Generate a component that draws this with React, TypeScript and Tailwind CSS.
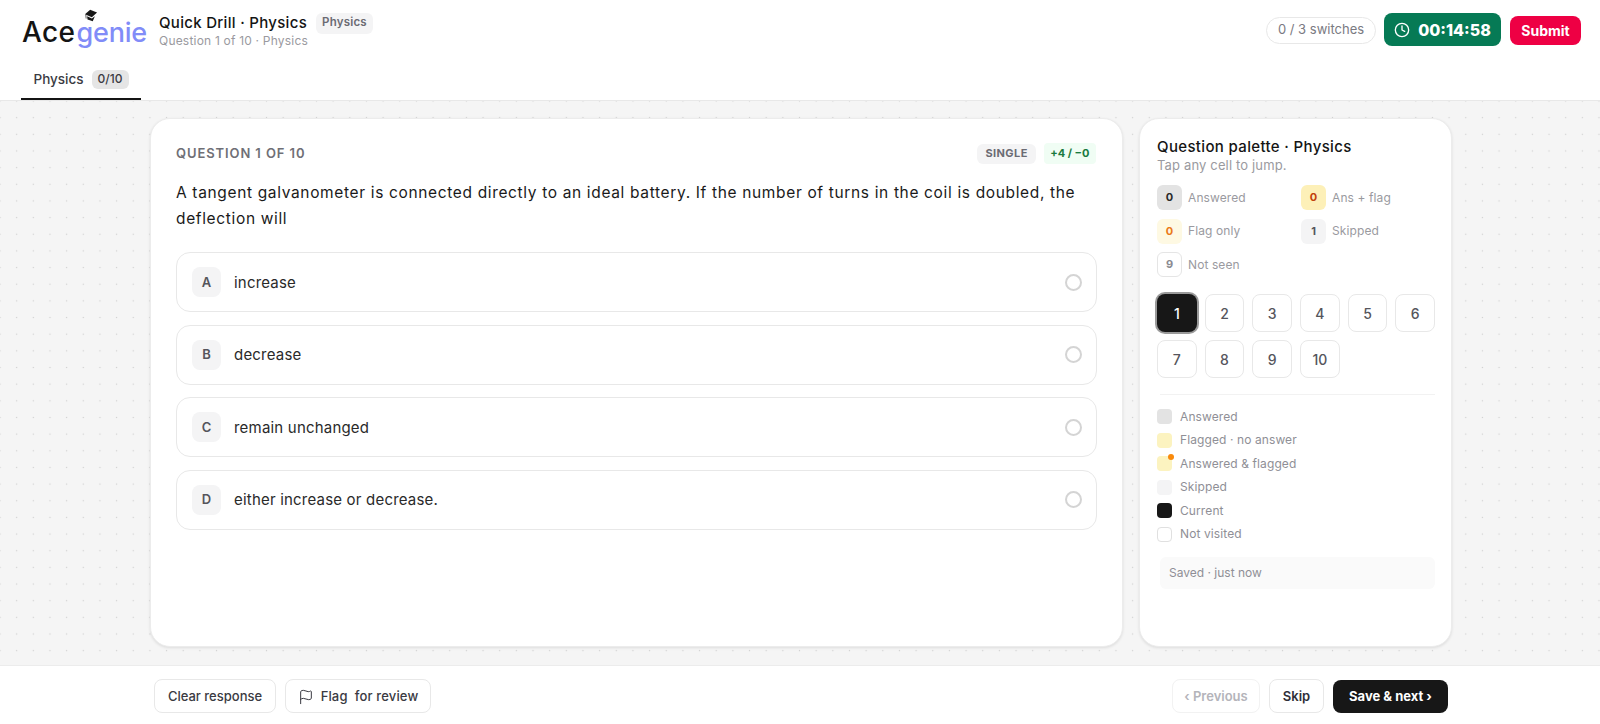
import { Clock, Flag } from 'lucide-react';

const OPTIONS = [
  { key: 'A', text: 'increase' },
  { key: 'B', text: 'decrease' },
  { key: 'C', text: 'remain unchanged' },
  { key: 'D', text: 'either increase or decrease.' },
];

const STATS = [
  { value: '0', label: 'Answered', chip: 'bg-[#e3e3e3] text-[#2a2a2a]' },
  { value: '0', label: 'Ans + flag', chip: 'bg-[#fdf0b8] text-[#c2410c]' },
  { value: '0', label: 'Flag only', chip: 'bg-[#fef9e3] text-[#ea7a1a]' },
  { value: '1', label: 'Skipped', chip: 'bg-[#f4f4f5] text-[#55555c]' },
  { value: '9', label: 'Not seen', chip: 'bg-white border border-[#e5e5e5] text-[#8a8a90]' },
];

const LEGEND = [
  { label: 'Answered', swatch: 'bg-[#e3e3e3]' },
  { label: 'Flagged · no answer', swatch: 'bg-[#fcf3c0]' },
  { label: 'Answered & flagged', swatch: 'bg-[#fcf3c0]', dot: true },
  { label: 'Skipped', swatch: 'bg-[#f4f4f5]' },
  { label: 'Current', swatch: 'bg-[#171717]' },
  { label: 'Not visited', swatch: 'bg-white border border-[#e0e0e0]' },
];

const Logo = () => (
  <div className="relative flex items-baseline w-[125px] ml-[22px] pt-[3px] leading-none [font-family:Inter,sans-serif]">
    <span className="text-[#141414] font-medium text-[28px] tracking-[0.4px]">Ace</span>
    <span className="ml-[1px] text-[#818cf8] font-medium text-[27px] tracking-[-0.2px]">genie</span>
    <svg viewBox="0 0 16 15" className="absolute left-[62px] -top-[6px] w-[14px] h-[13px]">
      <path d="M1 6 L7 1 L15 4 L9 9.5 Z" fill="#171717" />
      <path d="M3.5 8.5 L4 12 L10 14 L12.5 8.5 L9 11 Z" fill="#171717" />
      <path d="M2 6.5 L2.4 11" stroke="#171717" strokeWidth="0.8" fill="none" />
    </svg>
  </div>
);

export default function App() {
  return (
    <div className="h-screen flex flex-col bg-white overflow-hidden [font-family:Inter,sans-serif]">
      {/* Header */}
      <header className="h-[101px] shrink-0 bg-white border-b border-[#e8e8e8] flex flex-col">
        <div className="flex items-center h-[60px] pr-[19px]">
          <Logo />
          <div className="ml-[12px]">
            <div className="flex items-center gap-[9px]">
              <span className="text-[15px] font-medium text-[#141414] tracking-[0.3px]">Quick Drill · Physics</span>
              <span className="h-[21px] flex items-center px-[6px] rounded-md bg-[#f4f4f5] text-[11.5px] font-semibold text-[#6b6b73] tracking-[0.2px]">Physics</span>
            </div>
            <div className="text-[12px] leading-[14px] text-[#9a9aa0] tracking-[0.2px]">Question 1 of 10 · Physics</div>
          </div>
          <div className="ml-auto flex items-center">
            <span className="h-[27px] w-[110px] flex items-center justify-center rounded-full border border-[#e8e8e8] text-[13px] text-[#7a7a82]">0 / 3 switches</span>
            <span className="ml-[8px] mb-[1px] h-[33px] w-[117px] flex items-center justify-center gap-[8px] rounded-lg bg-[#067a55] text-white text-[16px] font-extrabold">
              <Clock className="w-[16px] h-[16px]" strokeWidth={2} />
              00:14:58
            </span>
            <button className="ml-[9px] h-[29px] w-[71px] rounded-lg bg-[#ee0044] text-white text-[14px] font-bold">Submit</button>
          </div>
        </div>
        <div className="flex flex-1 pl-[21px]">
          <div className="w-[120px] h-[40px] flex items-center justify-center gap-[8px] border-b-2 border-[#141414]">
            <span className="text-[13.5px] font-medium text-[#3a3a42]">Physics</span>
            <span className="h-[19px] flex items-center px-[6px] rounded-md bg-[#e5e5e5] text-[12px] font-medium text-[#3a3a42]">0/10</span>
          </div>
        </div>
      </header>

      {/* Main */}
      <main className="flex-1 min-h-0 flex gap-[16px] pl-[150px] pr-[148px] pt-[17px] pb-[18px] bg-[#f5f5f5] bg-[radial-gradient(#cfcfcf_0.8px,transparent_1px)] bg-[size:16.67px_16.67px] bg-[position:-8.33px_-8.33px]">
        <section className="flex-1 bg-white rounded-[20px] border border-[#ececec] shadow-[0_1px_3px_rgba(0,0,0,0.1)] px-[25px] pt-[24px]">
          <div className="flex items-center justify-between h-[21px]">
            <span className="text-[13px] font-semibold text-[#6f6f76] tracking-[0.9px]">QUESTION 1 OF 10</span>
            <div className="flex items-center gap-[8px] mr-[1px]">
              <span className="h-[20px] flex items-center px-[8px] rounded-md bg-[#f4f4f5] text-[11px] font-bold text-[#6b6b73] tracking-[0.4px]">SINGLE</span>
              <span className="h-[21px] flex items-center px-[6.5px] rounded-[4px] bg-[#f0fdf4] text-[11px] font-bold text-[#1a7a3e]">+4 / −0</span>
            </div>
          </div>
          <p className="mt-[16px] text-[15.5px] leading-[26px] text-[#1a1a1a] tracking-[0.65px]">
            A tangent galvanometer is connected directly to an ideal battery. If the number of turns in the coil is doubled, the deflection will
          </p>
          <div className="mt-[20px] flex flex-col gap-[12.5px]">
            {OPTIONS.map((o) => (
              <div key={o.key} className="h-[60px] flex items-center pl-[15px] pr-[14px] rounded-[14px] border border-[#e8e8e8] bg-white">
                <span className="w-[29px] h-[30px] pt-[1px] flex items-center justify-center rounded-lg bg-[#f4f4f5] text-[13px] font-semibold text-[#55555c]">{o.key}</span>
                <span className="ml-[13px] pt-[2px] text-[15px] text-[#2a2a2a] tracking-[0.2px]">{o.text}</span>
                <span className="ml-auto w-[17px] h-[17px] rounded-full border-2 border-[#d4d4d4]" />
              </div>
            ))}
          </div>
        </section>

        <aside className="w-[313px] shrink-0 bg-white rounded-[20px] border border-[#ececec] shadow-[0_1px_3px_rgba(0,0,0,0.1)] pl-[17px] pr-[16px] pt-[18px]">
          <h2 className="text-[15px] leading-[20px] font-medium text-[#141414] tracking-[0.35px]">Question palette · Physics</h2>
          <p className="text-[13px] leading-[16px] text-[#9a9aa0] tracking-[0.15px]">Tap any cell to jump.</p>
          <div className="mt-[12px] grid grid-cols-2 gap-x-[10px] gap-y-[8.5px]">
            {STATS.map((s) => (
              <div key={s.label} className="flex items-center gap-[6px]">
                <span className={`w-[25px] h-[25px] flex items-center justify-center rounded-md text-[11px] font-bold ${s.chip}`}>{s.value}</span>
                <span className="text-[12px] text-[#9a9aa0] tracking-[0.1px]">{s.label}</span>
              </div>
            ))}
          </div>
          <div className="mt-[17px] grid grid-cols-6 gap-[8px]">
            {Array.from({ length: 10 }, (_, i) => i + 1).map((n) => (
              <button
                key={n}
                className={`h-[38px] rounded-lg text-[14px] font-medium ${
                  n === 1
                    ? 'bg-[#171717] text-white font-bold shadow-[0_0_0_2px_#9a9a9a]'
                    : 'bg-white border border-[#e8e8e8] text-[#55555c]'
                }`}
              >
                {n}
              </button>
            ))}
          </div>
          <div className="mt-[16px] ml-[3px] border-t border-[#f2f2f2]" />
          <div className="pt-[14px] flex flex-col gap-[8px]">
            {LEGEND.map((l) => (
              <div key={l.label} className="h-[15.5px] flex items-center gap-[8px]">
                <span className={`relative w-[15px] h-[15px] rounded-[4px] ${l.swatch}`}>
                  {l.dot && <span className="absolute -top-[2px] -right-[2px] w-[6px] h-[6px] rounded-full bg-[#f98a0c]" />}
                </span>
                <span className="text-[12px] text-[#8f8f96] tracking-[0.1px]">{l.label}</span>
              </div>
            ))}
          </div>
          <div className="mt-[15px] ml-[3px] h-[32px] flex items-center px-[9px] rounded-md bg-[#fafafa] text-[12px] text-[#8f8f96]">Saved · just now</div>
        </aside>
      </main>

      {/* Footer */}
      <footer className="h-[59px] shrink-0 bg-white border-t border-[#ececec] flex items-center pt-[2px] pl-[154px] pr-[152px]">
        <button className="h-[34px] w-[122px] pt-[1px] rounded-lg border border-[#e8e8e8] text-[13px] font-medium text-[#3a3a42]">Clear response</button>
        <button className="ml-[9px] h-[34px] w-[146px] pt-[1px] flex items-center justify-center gap-[7px] rounded-lg border border-[#e8e8e8] text-[13px] font-medium text-[#3a3a42] tracking-[0.15px]">
          <Flag className="w-[16px] h-[16px]" strokeWidth={1.5} />
          Flag&nbsp; for review
        </button>
        <button className="ml-auto h-[34px] w-[88px] pt-[1px] rounded-lg border border-[#f2f2f2] text-[13px] font-semibold text-[#b4b4ba]">‹ Previous</button>
        <button className="ml-[9px] h-[34px] w-[55px] pt-[1px] rounded-lg border border-[#e8e8e8] text-[13px] font-semibold text-[#2f2f38]">Skip</button>
        <button className="ml-[9px] h-[33px] w-[115px] pt-[1px] rounded-lg bg-[#171717] text-white text-[13px] font-bold">Save &amp; next ›</button>
      </footer>
    </div>
  );
}
